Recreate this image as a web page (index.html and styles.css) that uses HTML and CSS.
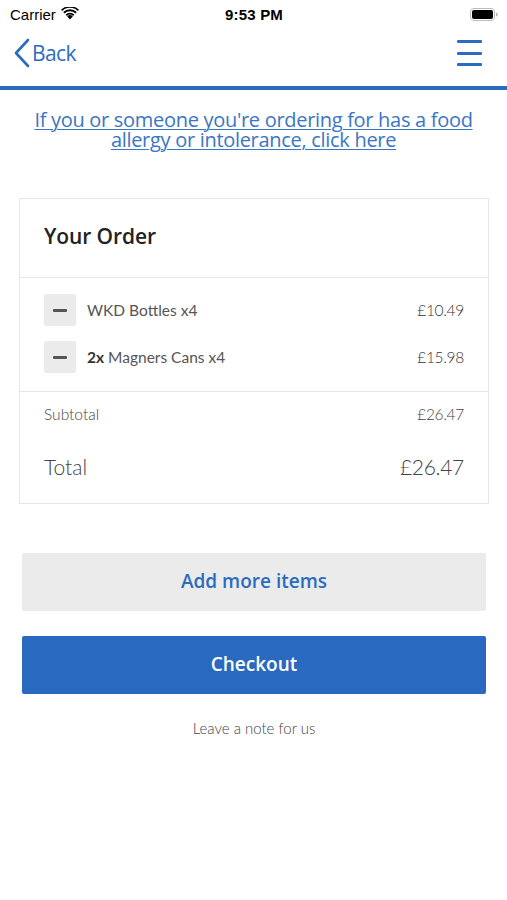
FILE: index.html
```html
<!DOCTYPE html>
<html lang="en">
<head>
<meta charset="utf-8">
<title>Your Order</title>
<link rel="stylesheet" href="styles.css">
</head>
<body>
<div class="status">
  <div class="status-left">
    <span>Carrier</span>
    <svg class="wifi" width="18" height="13" viewBox="0 0 18 13">
      <path d="M9 12.5 L6.2 9.4 A4 4 0 0 1 11.8 9.4 Z" fill="#000"/>
      <path d="M4.6 7.6 A6.4 6.4 0 0 1 13.4 7.6 L12.1 9 A4.5 4.5 0 0 0 5.9 9 Z" fill="#000"/>
      <path d="M2.2 5.1 A9.8 9.8 0 0 1 15.8 5.1 L14.5 6.5 A7.9 7.9 0 0 0 3.5 6.5 Z" fill="#000"/>
      <path d="M0 2.7 A13 13 0 0 1 18 2.7 L16.8 4 A11.2 11.2 0 0 0 1.2 4 Z" fill="#000"/>
    </svg>
  </div>
  <div class="status-time">9:53 PM</div>
  <div class="status-right">
    <svg width="28" height="13" viewBox="0 0 28 13">
      <rect x="0.5" y="0.5" width="24" height="12" rx="3.5" fill="none" stroke="#bbb"/>
      <rect x="2" y="2" width="21" height="9" rx="2" fill="#000"/>
      <path d="M26 4.5 A2 2 0 0 1 26 8.5 Z" fill="#bbb"/>
    </svg>
  </div>
</div>
<nav class="nav">
  <a class="back" href="#">
    <svg width="18" height="30" viewBox="0 0 18 30"><path d="M15 2 L3 15 L15 28" fill="none" stroke="#2b6cbf" stroke-width="2.6" stroke-linecap="round" stroke-linejoin="round"/></svg>
    <span>Back</span>
  </a>
  <div class="burger"><span></span><span></span><span></span></div>
</nav>
<div class="bluebar"></div>
<main>
  <a class="allergy" href="#">If you or someone you're ordering for has a food allergy or intolerance, click here</a>
  <section class="card">
    <div class="card-head">Your Order</div>
    <div class="items">
      <div class="item">
        <button class="minus"><span></span></button>
        <div class="item-name">WKD Bottles x4</div>
        <div class="item-price">£10.49</div>
      </div>
      <div class="item">
        <button class="minus"><span></span></button>
        <div class="item-name"><b>2x</b> Magners Cans x4</div>
        <div class="item-price">£15.98</div>
      </div>
    </div>
    <div class="totals">
      <div class="row sub"><span>Subtotal</span><span>£26.47</span></div>
      <div class="row total"><span>Total</span><span>£26.47</span></div>
    </div>
  </section>
  <div class="actions">
    <button class="btn btn-grey">Add more items</button>
    <button class="btn btn-blue">Checkout</button>
    <a class="note" href="#">Leave a note for us</a>
  </div>
</main>
</body>
</html>
```
FILE: styles.css
```css
* { box-sizing: border-box; }
html, body { margin: 0; padding: 0; background: #fff; }
body { width: 507px; font-family: "Open Sans", "Noto Sans", sans-serif; }

.status {
  height: 28px;
  display: flex;
  align-items: center;
  justify-content: space-between;
  padding: 0 9px 0 10px;
  font-family: "Liberation Sans", Arial, sans-serif;
  font-size: 15px;
  color: #000;
}
.status-left { display: flex; align-items: center; gap: 5px; width: 120px; }
.wifi { margin-top: -2px; }
.status-time { font-weight: bold; font-size: 15px; letter-spacing: 0.2px; }
.status-right { width: 120px; display: flex; justify-content: flex-end; }

.nav {
  height: 58px;
  display: flex;
  align-items: center;
  justify-content: space-between;
  padding: 0 25px 8px 13px;
}
.back {
  display: flex;
  align-items: center;
  gap: 1px;
  text-decoration: none;
  color: #2b6cbf;
  font-family: "Open Sans", sans-serif;
  font-size: 21px;
  letter-spacing: -0.6px;
}
.burger { display: flex; flex-direction: column; gap: 8.5px; width: 25px; }
.burger span { display: block; height: 3px; background: #2b6cbf; border-radius: 1px; }

.bluebar { height: 4px; background: #2b6cbf; }

main { display: flex; flex-direction: column; }

.allergy {
  display: block;
  margin: 20px 24px 0;
  text-align: center;
  color: #3a76c4;
  font-family: "Open Sans", sans-serif;
  font-weight: 500;
  font-size: 20px;
  line-height: 20px;
  letter-spacing: -0.3px;
  text-decoration: underline;
  text-decoration-thickness: 1px;
  text-underline-offset: 2px;
}

.card {
  margin: 48px 18px 0 19px;
  border: 1px solid #e6e6e6;
  background: #fff;
}
.card-head {
  height: 79px;
  padding: 0 24px 5px;
  display: flex;
  align-items: center;
  border-bottom: 1px solid #e6e6e6;
  font-family: "Open Sans", sans-serif;
  font-weight: 600;
  font-size: 21px;
  color: #222;
  letter-spacing: -0.1px;
}
.items {
  padding: 16px 24px 18px;
  display: flex;
  flex-direction: column;
  gap: 15px;
  border-bottom: 1px solid #e6e6e6;
}
.item { display: flex; align-items: center; height: 32px; }
.minus {
  width: 32px; height: 32px;
  border: none;
  padding: 0;
  background: #ebebeb;
  border-radius: 2px;
  display: flex;
  align-items: center;
  justify-content: center;
  margin-right: 11px;
}
.minus span { display: block; width: 14px; height: 3px; background: #555; border-radius: 1px; }
.item-name {
  flex: 1;
  font-family: Lato, sans-serif;
  font-size: 15.5px;
  color: #555;
}
.item-name b { font-weight: 700; color: #333; }
.item-price {
  font-family: Lato, sans-serif;
  font-weight: 300;
  font-size: 15.5px;
  color: #333;
  letter-spacing: -0.3px;
}

.totals { padding: 12px 24px 22px; display: flex; flex-direction: column; gap: 29px; }
.row { display: flex; justify-content: space-between; font-family: Lato, sans-serif; font-weight: 300; }
.row.sub { font-size: 15.5px; line-height: 20px; color: #444; }
.row.total { font-size: 21px; line-height: 28px; color: #444; }
.row span:last-child { letter-spacing: -0.3px; }

.actions {
  margin: 49px 21px 0 22px;
  display: flex;
  flex-direction: column;
}
.btn {
  height: 58px;
  border: none;
  border-radius: 2px;
  font-family: "Open Sans", sans-serif;
  font-weight: 600;
  font-size: 19px;
  letter-spacing: 0;
  padding: 0 0 2px;
}
.btn-grey { background: #ebebeb; color: #2b6cbf; }
.btn-blue { background: #2969bf; color: #fff; margin-top: 25px; }
.note {
  margin-top: 24px;
  text-align: center;
  line-height: 20px;
  font-family: Lato, sans-serif;
  font-weight: 300;
  font-size: 15px;
  color: #444;
  text-decoration: none;
}
```
